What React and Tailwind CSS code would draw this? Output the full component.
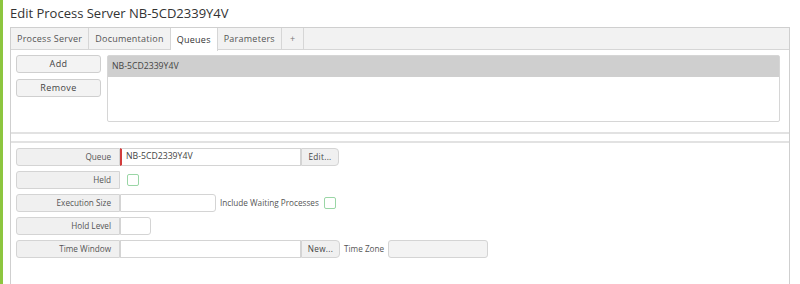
const labelCls =
  "w-[104px] h-[18px] shrink-0 flex items-center justify-end pr-[8px] bg-[#f0f0f0] border border-[#d4d4d4] rounded-l-[3px] text-[#555]";

function Row({ label, children }) {
  return (
    <div className="flex items-center h-[18px]">
      <div className={labelCls}>{label}</div>
      {children}
    </div>
  );
}

function Check() {
  return <div className="w-[12px] h-[12px] border border-[#9ad6a6] rounded-[2px] bg-white" />;
}

export default function App() {
  const tabs = ["Process Server", "Documentation", "Queues", "Parameters", "+"];
  return (
    <div
      className="w-[800px] h-[284px] overflow-hidden bg-white flex text-[8.2px] text-[#444]"
      style={{ fontFamily: "'Open Sans', 'Liberation Sans', sans-serif" }}
    >
      <div className="w-[3px] shrink-0 bg-[#8dc63f]" />
      <div className="flex-1 pl-[7px] pr-[10px]">
        <div className="h-[27px] flex items-center text-[13px] text-[#333] pt-[1px]">
          Edit Process Server NB-5CD2339Y4V
        </div>
        <div className="border border-[#cfcfcf] h-[260px]">
          <div className="flex h-[22px] bg-[#f2f2f2] border-b border-[#d6d6d6] text-[9px] tracking-[0.25px]">
            {tabs.map((t) => (
              <div
                key={t}
                className={
                  "flex items-center border-r border-[#d6d6d6] " +
                  (t === "Queues" ? "bg-white h-[23px] text-[#333] " : "text-[#555] ") +
                  (t === "+" ? "px-[8px] text-[#777]" : "px-[6px]")
                }
              >
                {t}
              </div>
            ))}
          </div>
          <div className="flex gap-[6px] px-[5px] pt-[5px]">
            <div className="flex flex-col gap-[6px] text-[9px] tracking-[0.4px]">
              <button className="w-[85px] h-[18px] bg-[#f3f3f3] border border-[#cfcfcf] rounded-[3px] text-[#444]">
                Add
              </button>
              <button className="w-[85px] h-[18px] bg-[#f3f3f3] border border-[#cfcfcf] rounded-[3px] text-[#444]">
                Remove
              </button>
            </div>
            <div className="flex-1 h-[67px] border border-[#d6d6d6] rounded-[2px] mr-[4px]">
              <div className="h-[21px] bg-[#cfcfcf] flex items-center pl-[4px] text-[#444] text-[8.7px]">
                NB-5CD2339Y4V
              </div>
            </div>
          </div>
          <div className="mt-[10px] h-[11px] border-t-2 border-b-2 border-[#e2e2e2]" />
          <div className="flex flex-col gap-[5px] px-[5px] pt-[5px]">
            <Row label="Queue">
              <div className="w-[181px] h-[18px] border border-[#d4d4d4] border-l-2 border-l-[#d23c3c] flex items-center pl-[4px] text-[#444] text-[8.7px]">
                NB-5CD2339Y4V
              </div>
              <button className="w-[38px] h-[18px] bg-[#f0f0f0] border border-[#d4d4d4] rounded-r-[4px] text-[#444] tracking-[0.3px]">
                Edit...
              </button>
            </Row>
            <Row label="Held">
              <div className="ml-[7px]">
                <Check />
              </div>
            </Row>
            <Row label="Execution Size">
              <div className="w-[96px] h-[18px] border border-[#d4d4d4] rounded-r-[3px]" />
              <span className="ml-[4px] mr-[5px] text-[#555]">Include Waiting Processes</span>
              <Check />
            </Row>
            <Row label="Hold Level">
              <div className="w-[31px] h-[18px] border border-[#d4d4d4] rounded-r-[3px]" />
            </Row>
            <Row label="Time Window">
              <div className="w-[181px] h-[18px] border border-[#d4d4d4]" />
              <button className="w-[39px] h-[18px] bg-[#f0f0f0] border border-[#d4d4d4] rounded-r-[4px] text-[#444] tracking-[0.3px]">
                New...
              </button>
              <span className="ml-[4px] mr-[4px] text-[#555]">Time Zone</span>
              <div className="w-[100px] h-[18px] bg-[#f3f3f3] border border-[#d4d4d4] rounded-[3px]" />
            </Row>
          </div>
        </div>
      </div>
    </div>
  );
}
